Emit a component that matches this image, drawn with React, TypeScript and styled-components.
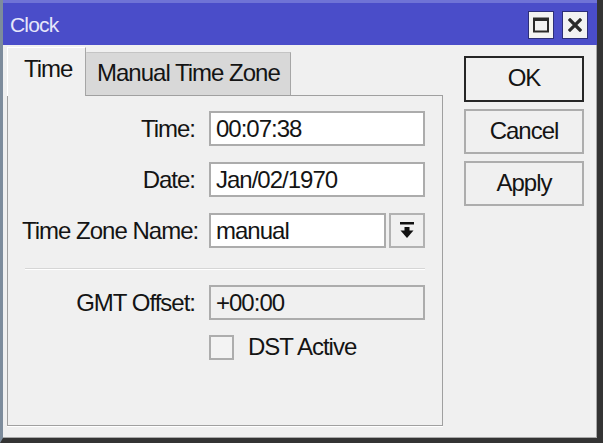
import React from "react";
import styled, { createGlobalStyle } from "styled-components";

const GlobalStyle = createGlobalStyle`
  html, body {
    margin: 0;
    padding: 0;
    background: #f0f0f0;
  }
  body {
    font-family: "Liberation Sans", Arial, sans-serif;
    color: #141414;
  }
  * {
    box-sizing: border-box;
  }
`;

const Window = styled.div`
  width: 603px;
  height: 443px;
  display: flex;
  flex-direction: column;
  border-left: 3px solid #7d8c9c;
  border-right: 6px solid #343434;
  border-bottom: 5px solid #343434;
  background: #f0f0f0;
  overflow: hidden;
`;

const TitleBar = styled.div`
  height: 45px;
  flex: 0 0 45px;
  display: flex;
  align-items: center;
  padding: 0 9px 0 7px;
  background: #4a4dc9;
  border-top: 3px solid #6f73d6;
`;

const Title = styled.div`
  flex: 1;
  font-size: 21px;
  letter-spacing: -0.8px;
  color: #e6e6fa;
  margin-top: 2px;
`;

const TitleButton = styled.div`
  width: 26px;
  height: 28px;
  margin-left: 8px;
  margin-top: 1px;
  display: flex;
  align-items: center;
  justify-content: center;
  background: #f2f2f2;
  border: 1px solid #2c2e78;
  svg {
    display: block;
  }
`;

const Body = styled.div`
  flex: 1;
  display: flex;
  padding: 2px 12px 11px 4px;
  border-right: 1px solid #a9a9a9;
  border-bottom: 1px solid #a9a9a9;
`;

const TabsArea = styled.div`
  width: 437px;
  display: flex;
  flex-direction: column;
`;

const TabStrip = styled.div`
  height: 48px;
  display: flex;
  align-items: flex-end;
  position: relative;
  z-index: 1;
`;

const Tab = styled.div<{ $active?: boolean }>`
  height: ${(p) => (p.$active ? "49px" : "43px")};
  margin-bottom: ${(p) => (p.$active ? "-1px" : "0")};
  display: flex;
  align-items: center;
  padding: ${(p) => (p.$active ? "0 22px 0 16px" : "0 10px 0 10px")};
  font-size: 24px;
  letter-spacing: -1px;
  padding-bottom: ${(p) => (p.$active ? "7px" : "2px")};
  background: ${(p) => (p.$active ? "#f0f0f0" : "#d8d8d8")};
  border-top: 1px solid ${(p) => (p.$active ? "#ffffff" : "#c4c4c4")};
  border-left: 1px solid ${(p) => (p.$active ? "#ffffff" : "#d8d8d8")};
  border-right: 1px solid #a6a6a6;
  width: ${(p) => (p.$active ? "79px" : "205px")};
  white-space: nowrap;
`;

const Panel = styled.div`
  flex: 1;
  border: 1px solid #a0a0a0;
  box-shadow: 0 1px 0 #ffffff;
  padding: 15px 17px 0 14px;
`;

const Form = styled.div`
  display: grid;
  grid-template-columns: 173px 1fr;
  column-gap: 14px;
  row-gap: 16px;
`;

const Label = styled.div`
  font-size: 24px;
  letter-spacing: -1px;
  text-align: right;
  align-self: center;
  white-space: nowrap;
`;

const Field = styled.input<{ $disabled?: boolean }>`
  width: 100%;
  height: 35px;
  margin: 0;
  padding: 0 0 0 5px;
  font-family: "Liberation Sans", Arial, sans-serif;
  font-size: 24px;
  letter-spacing: -1px;
  color: #141414;
  background: ${(p) => (p.$disabled ? "#f0f0f0" : "#ffffff")};
  border: 2px solid #acacac;
  border-radius: 0;
  outline: none;
`;

const ComboRow = styled.div`
  display: flex;
  gap: 3px;
`;

const DropButton = styled.div`
  flex: 0 0 36px;
  height: 35px;
  display: flex;
  align-items: center;
  justify-content: center;
  background: #f0f0f0;
  border: 2px solid #b2b2b2;
`;

const Separator = styled.div`
  grid-column: 1 / 3;
  height: 2px;
  margin: 4px 0 -1px 3px;
  border-top: 1px solid #d6d6d6;
  border-bottom: 1px solid #ffffff;
`;

const CheckRow = styled.label`
  grid-column: 2;
  display: flex;
  align-items: center;
  gap: 14px;
  margin-top: -3px;
  font-size: 24px;
  letter-spacing: -1px;
`;

const CheckBox = styled.span`
  width: 25px;
  height: 25px;
  border: 2px solid #adadad;
  background: #f3f3f3;
`;

const ButtonColumn = styled.div`
  margin-left: 21px;
  padding-top: 9px;
  display: flex;
  flex-direction: column;
  gap: 7px;
`;

const DialogButton = styled.button<{ $default?: boolean }>`
  width: 120px;
  height: ${(p) => (p.$default ? "46px" : "45px")};
  margin: 0;
  padding: 0 0 2px;
  font-family: "Liberation Sans", Arial, sans-serif;
  font-size: 24px;
  letter-spacing: -1px;
  color: #141414;
  background: #f0f0f0;
  border: 2px solid ${(p) => (p.$default ? "#262626" : "#adadad")};
  border-radius: 0;
`;

function MaximizeIcon() {
  return (
    <svg width="16" height="16" viewBox="0 0 16 16">
      <rect x="1" y="1.5" width="14" height="13" fill="none" stroke="#2a2a2a" strokeWidth="2" />
      <rect x="1" y="1" width="14" height="3" fill="#2a2a2a" />
    </svg>
  );
}

function CloseIcon() {
  return (
    <svg width="14" height="14" viewBox="0 0 14 14">
      <path d="M2 2 L12 12 M12 2 L2 12" stroke="#2a2a2a" strokeWidth="3.2" strokeLinecap="square" />
    </svg>
  );
}

function DropIcon() {
  return (
    <svg width="16" height="17" viewBox="0 0 16 17">
      <rect x="1" y="0" width="14" height="2.5" fill="#111" />
      <rect x="5.5" y="5" width="5" height="4" fill="#111" />
      <path d="M1.5 8.5 H14.5 L8 16 Z" fill="#111" />
    </svg>
  );
}

export default function App() {
  return (
    <>
      <GlobalStyle />
      <Window>
        <TitleBar>
          <Title>Clock</Title>
          <TitleButton>
            <MaximizeIcon />
          </TitleButton>
          <TitleButton>
            <CloseIcon />
          </TitleButton>
        </TitleBar>
        <Body>
          <TabsArea>
            <TabStrip>
              <Tab $active>Time</Tab>
              <Tab>Manual Time Zone</Tab>
            </TabStrip>
            <Panel>
              <Form>
                <Label>Time:</Label>
                <Field readOnly value="00:07:38" />
                <Label>Date:</Label>
                <Field readOnly value="Jan/02/1970" />
                <Label>Time Zone Name:</Label>
                <ComboRow>
                  <Field readOnly value="manual" />
                  <DropButton>
                    <DropIcon />
                  </DropButton>
                </ComboRow>
                <Separator />
                <Label>GMT Offset:</Label>
                <Field readOnly $disabled value="+00:00" />
                <CheckRow>
                  <CheckBox />
                  DST Active
                </CheckRow>
              </Form>
            </Panel>
          </TabsArea>
          <ButtonColumn>
            <DialogButton $default>OK</DialogButton>
            <DialogButton>Cancel</DialogButton>
            <DialogButton>Apply</DialogButton>
          </ButtonColumn>
        </Body>
      </Window>
    </>
  );
}
